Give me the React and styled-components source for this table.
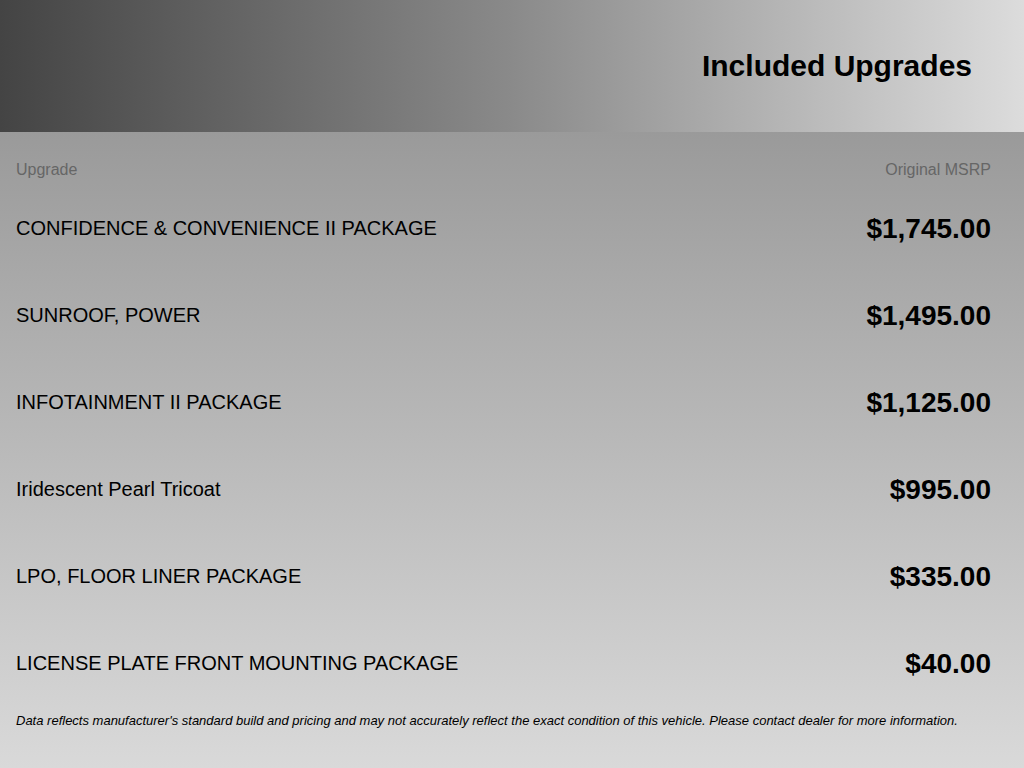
import styled, { createGlobalStyle } from "styled-components"

const GlobalStyle = createGlobalStyle`
    html, body {
        margin: 0;
        padding: 0;
        height: 100%;
    }
    body {
        font-family: "Liberation Sans", Arial, sans-serif;
        background: #d9d9d9;
    }
`

const Page = styled.div`
    width: 1024px;
    min-height: 768px;
    display: flex;
    flex-direction: column;
    background: linear-gradient(to bottom, #9a9a9a 132px, #d9d9d9 100%);
`

const Header = styled.header`
    height: 132px;
    display: flex;
    align-items: center;
    justify-content: flex-end;
    padding-right: 52px;
    background: linear-gradient(to right, #444444 0%, #8a8a8a 50%, #dcdcdc 100%);
`

const Title = styled.h1`
    margin: 0;
    font-size: 30px;
    font-weight: bold;
    color: #000;
`

const Content = styled.div`
    padding: 0 33px 0 16px;
`

const HeadRow = styled.div`
    display: flex;
    justify-content: space-between;
    align-items: center;
    height: 76px;
    font-size: 16px;
    color: #666;
`

const Row = styled.div`
    display: flex;
    justify-content: space-between;
    align-items: center;
    height: 87px;
    margin-top: ${p => (p.first ? "-23px" : "0")};
`

const Name = styled.span`
    font-size: 20px;
    color: #000;
`

const Price = styled.span`
    font-size: 28px;
    font-weight: bold;
    color: #000;
`

const Note = styled.p`
    margin: 0;
    margin-top: 6px;
    font-size: 13px;
    font-style: italic;
    color: #000;
`

const upgrades = [
    ["CONFIDENCE & CONVENIENCE II PACKAGE", "$1,745.00"],
    ["SUNROOF, POWER", "$1,495.00"],
    ["INFOTAINMENT II PACKAGE", "$1,125.00"],
    ["Iridescent Pearl Tricoat", "$995.00"],
    ["LPO, FLOOR LINER PACKAGE", "$335.00"],
    ["LICENSE PLATE FRONT MOUNTING PACKAGE", "$40.00"],
]

const App = () => {
    return (
        <Page>
            <GlobalStyle />
            <Header>
                <Title>Included Upgrades</Title>
            </Header>
            <Content>
                <HeadRow>
                    <span>Upgrade</span>
                    <span>Original MSRP</span>
                </HeadRow>
                {upgrades.map(([name, price], i) => (
                    <Row key={name} first={i === 0}>
                        <Name>{name}</Name>
                        <Price>{price}</Price>
                    </Row>
                ))}
                <Note>
                    Data reflects manufacturer's standard build and pricing and may not accurately reflect the exact condition of this vehicle. Please contact dealer for more information.
                </Note>
            </Content>
        </Page>
    )
}

export default App
